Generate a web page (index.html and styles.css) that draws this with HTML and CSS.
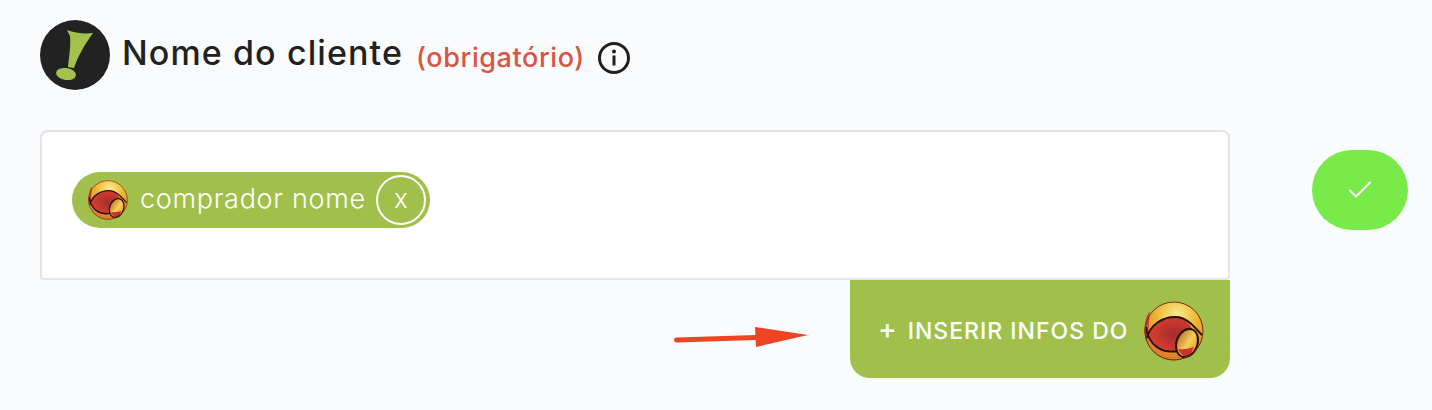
FILE: index.html
```html
<!DOCTYPE html>
<html lang="pt-br">
<head>
  <meta charset="UTF-8" />
  <meta name="viewport" content="width=device-width, initial-scale=1.0"/>
  <title>Nome do cliente</title>
  <link rel="stylesheet" href="styles.css">
</head>
<body>
  <svg class="defs" width="0" height="0">
    <defs>
      <radialGradient id="ouro" cx="55%" cy="22%" r="80%">
        <stop offset="0" stop-color="#fdeb8e"/>
        <stop offset="0.45" stop-color="#eeb52f"/>
        <stop offset="1" stop-color="#d9752b"/>
      </radialGradient>
      <radialGradient id="vermelho" cx="60%" cy="50%" r="60%">
        <stop offset="0" stop-color="#a32c2e"/>
        <stop offset="1" stop-color="#dc3f30"/>
      </radialGradient>
      <linearGradient id="miolo" x1="0" y1="0.2" x2="1" y2="0.5">
        <stop offset="0" stop-color="#b9702c"/>
        <stop offset="0.6" stop-color="#f5d05a"/>
        <stop offset="1" stop-color="#e9a52c"/>
      </linearGradient>
      <symbol id="bola" viewBox="0 0 60 60">
        <circle cx="30" cy="30" r="29.500" fill="url(#ouro)"/>
        <path d="M0 30C1 22 2 14 6 10L4 35L2 40Z" fill="#d9432c"/>
        <path d="M4 35C8 24 20 15 33 16C40 17 46 22 48 28L33 50C20 50 9 45 4 35Z" fill="url(#vermelho)"/>
        <path d="M2 26C4 44 18 53 34 50M3 37C6 24 19 15 33 16C44 17 50 26 58 34" fill="none" stroke="#2a0f0c" stroke-width="2"/>
        <ellipse cx="43" cy="42" rx="10.500" ry="14.500" transform="rotate(20 43 42)" fill="url(#miolo)"/>
        <path d="M34 48C39 49 47 47 50 46L46 55C42 57 37 55 34 48Z" fill="#c9352c"/>
        <ellipse cx="43" cy="42" rx="10.500" ry="14.500" transform="rotate(20 43 42)" fill="none" stroke="#2a0f0c" stroke-width="2"/>
        <circle cx="30" cy="30" r="29" fill="none" stroke="#6e2a18" stroke-width="1"/>
      </symbol>
    </defs>
  </svg>

  <div class="cabecalho">
    <svg class="logo" viewBox="0 0 70 70">
      <circle cx="35" cy="35" r="35" fill="#222"/>
      <path d="M27 10C35 13 44 14 53 13C45 24 38 36 34 48L28 47C29 36 31 26 30 16Z" fill="#a3c14d"/>
      <ellipse cx="26" cy="54" rx="10" ry="6" transform="rotate(8 26 54)" fill="#a3c14d"/>
    </svg>
    <h1 class="titulo">Nome do cliente</h1>
    <span class="obrigatorio">(obrigatório)</span>
    <svg class="info" viewBox="0 0 32 32">
      <circle cx="16" cy="16" r="14.500" fill="none" stroke="#1f1f1f" stroke-width="3"/>
      <circle cx="16" cy="9.500" r="2" fill="#1f1f1f"/>
      <rect x="14.500" y="13.500" width="3" height="10" fill="#1f1f1f"/>
    </svg>
  </div>

  <div class="linha">
    <div class="coluna">
      <div class="campo">
        <div class="chip">
          <svg class="bola-chip"><use href="#bola"/></svg>
          <span class="chip-texto">comprador nome</span>
          <span class="chip-fechar">x</span>
        </div>
      </div>
      <div class="acoes">
        <svg class="seta" width="134" height="22" viewBox="0 0 134 22">
          <path d="M2.500 14L82 11.500" stroke="#ee4423" stroke-width="5" stroke-linecap="round"/>
          <path d="M81 1L134 9L82 21Z" fill="#ee4423"/>
        </svg>
        <button class="inserir">
          <span class="mais">+</span>
          <span>INSERIR INFOS DO</span>
          <svg class="bola-botao"><use href="#bola"/></svg>
        </button>
      </div>
    </div>
    <button class="confirmar">
      <svg width="24" height="18" viewBox="0 0 24 18">
        <path d="M1.500 9L8 15.500L22.500 1" fill="none" stroke="#fff" stroke-width="2"/>
      </svg>
    </button>
  </div>
</body>
</html>
```

FILE: styles.css
```css
body {
  font-family: Inter, Arial, sans-serif;
  background-color: #fafbfd;
  margin: 0;
  padding: 20px 24px 0 40px;
}
.defs { position: absolute; }
.cabecalho {
  display: flex;
  align-items: center;
  height: 70px;
}
.logo {
  width: 70px;
  height: 70px;
  margin-right: 12px;
}
.titulo {
  margin: 0 13px 0 0;
  font-size: 34px;
  font-weight: 500;
  letter-spacing: 1.1px;
  color: #212121;
  padding-bottom: 5px;
  white-space: nowrap;
}
.obrigatorio {
  font-size: 27px;
  color: #d9553f;
  font-weight: 500;
  letter-spacing: 0.6px;
  padding-top: 4px;
  margin-right: 13px;
}
.info {
  width: 32px;
  height: 32px;
  margin-top: 6px;
}
.linha {
  display: flex;
  margin-top: 40px;
}
.coluna { width: 1190px; }
.campo {
  box-sizing: border-box;
  height: 150px;
  background-color: white;
  border: 2px solid #e3e4e8;
  border-radius: 8px 8px 4px 4px;
  padding: 40px 30px;
  display: flex;
  align-items: flex-start;
}
.chip {
  display: flex;
  align-items: center;
  box-sizing: border-box;
  width: 358px;
  height: 56px;
  padding: 0 4px 0 16px;
  border-radius: 28px;
  background-color: #a1c04b;
  color: white;
}
.bola-chip {
  width: 40px;
  height: 40px;
  margin-right: 12px;
}
.chip-texto {
  font-size: 27px;
  font-weight: 300;
  letter-spacing: 0.7px;
  flex: 1;
  white-space: nowrap;
  padding-bottom: 3px;
}
.chip-fechar {
  box-sizing: border-box;
  width: 50px;
  height: 50px;
  border: 2px solid white;
  border-radius: 50%;
  font-size: 26px;
  font-weight: 300;
  display: flex;
  align-items: center;
  justify-content: center;
  padding-bottom: 3px;
}
.acoes {
  display: flex;
  justify-content: flex-end;
  align-items: center;
}
.seta {
  margin-right: 42px;
  margin-top: 16px;
}
.inserir {
  display: flex;
  align-items: center;
  box-sizing: border-box;
  width: 380px;
  height: 98px;
  padding: 4px 26px 0 28px;
  border: 0;
  border-radius: 0 0 20px 20px;
  background-color: #a1c04b;
  color: white;
  font-family: inherit;
  font-size: 23px;
  font-weight: 500;
  letter-spacing: 1px;
}
.mais {
  font-size: 28px;
  margin-right: 10px;
  line-height: 1;
  padding-bottom: 4px;
}
.bola-botao {
  width: 60px;
  height: 60px;
  margin-left: auto;
}
.confirmar {
  width: 96px;
  height: 80px;
  margin: 20px 0 0 82px;
  padding: 0;
  border: 0;
  border-radius: 40px;
  background-color: #78ea4a;
  display: flex;
  align-items: center;
  justify-content: center;
}
```
